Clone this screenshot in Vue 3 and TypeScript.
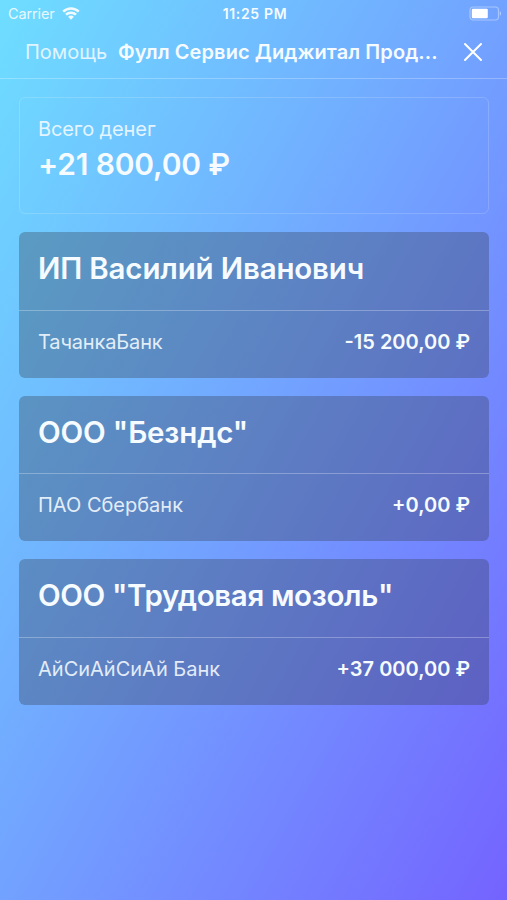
<script setup lang="ts">
interface Company {
  name: string
  nameClass: string
  bank: string
  bankClass: string
  balance: string
}

const companies: Company[] = [
  { name: 'ИП Василий Иванович', nameClass: 'n1', bank: 'ТачанкаБанк', bankClass: 'b1', balance: '-15 200,00 ₽' },
  { name: 'ООО "Безндс"', nameClass: 'n2', bank: 'ПАО Сбербанк', bankClass: 'b2', balance: '+0,00 ₽' },
  { name: 'ООО "Трудовая мозоль"', nameClass: 'n3', bank: 'АйСиАйСиАй Банк', bankClass: 'b3', balance: '+37 000,00 ₽' },
]
</script>

<template>
  <div class="screen">
    <div class="status">
      <div class="carrier">
        <span>Carrier</span>
        <svg class="wifi" width="18" height="13" viewBox="0 0 18 13">
          <g fill="none" stroke="#fff" stroke-width="2.5">
            <path d="M1.2 4.6a11.2 11.2 0 0 1 15.6 0" />
            <path d="M4 7.7a7.1 7.1 0 0 1 10 0" />
          </g>
          <path d="M9 12.7 6.1 9.8a4.2 4.2 0 0 1 5.8 0z" fill="#fff" />
        </svg>
      </div>
      <div class="time">11:25 PM</div>
      <svg class="battery" width="33" height="15" viewBox="0 0 33 15">
        <rect x="1" y="1" width="28.5" height="13" rx="3.2" fill="none" stroke="#fff" stroke-opacity=".38" stroke-width="1.2" />
        <rect x="2.8" y="2.8" width="16" height="9.4" rx="1.2" fill="#fff" />
        <path d="M30.8 5.2c1.6.5 1.6 4.1 0 4.6z" fill="#fff" fill-opacity=".45" />
      </svg>
    </div>

    <header class="nav">
      <span class="help">Помощь</span>
      <span class="title">Фулл Сервис Диджитал Прод...</span>
      <svg class="close" width="20" height="20" viewBox="0 0 20 20">
        <path d="M2 2 18 18M18 2 2 18" stroke="#fff" stroke-width="2" stroke-linecap="round" />
      </svg>
    </header>

    <main class="content">
      <section class="total">
        <div class="label">Всего денег</div>
        <div class="sum">+21 800,00 ₽</div>
      </section>
      <section v-for="c in companies" :key="c.name" class="card">
        <h2 class="name" :class="c.nameClass">{{ c.name }}</h2>
        <div class="row">
          <span class="bank" :class="c.bankClass">{{ c.bank }}</span>
          <span class="balance">{{ c.balance }}</span>
        </div>
      </section>
    </main>
  </div>
</template>

<style>
body {
  margin: 0;
}
</style>

<style scoped>
.screen {
  box-sizing: border-box;
  width: 507px;
  height: 900px;
  overflow: hidden;
  color: #f5fbff;
  font-family: Inter, "Liberation Sans", sans-serif;
  white-space: nowrap;
  background: linear-gradient(to bottom right, #6edeff 0%, #72a2ff 50%, #7463ff 100%);
}
.status {
  display: grid;
  grid-template-columns: 1fr auto 1fr;
  align-items: center;
  height: 27px;
  padding: 0 5px 0 8px;
}
.carrier {
  display: flex;
  align-items: center;
  gap: 7px;
  font-size: 14.5px;
  letter-spacing: -.12px;
  opacity: .9;
}
.time {
  font-size: 14px;
  font-weight: 600;
  letter-spacing: .65px;
}
.battery {
  justify-self: end;
}
.nav {
  display: flex;
  align-items: center;
  box-sizing: border-box;
  height: 52px;
  padding: 0 24px 1px 25px;
  border-bottom: 1px solid rgba(255, 255, 255, .25);
}
.help {
  width: 93px;
  font-size: 20px;
  opacity: .85;
}
.title {
  flex: 1;
  font-size: 20px;
  font-weight: 600;
  letter-spacing: .09px;
}
.content {
  display: flex;
  flex-direction: column;
  gap: 18px;
  padding: 18px 18px 0 19px;
}
.total {
  box-sizing: border-box;
  height: 117px;
  padding: 18px;
  border: 1.5px solid rgba(255, 255, 255, .16);
  border-radius: 6px;
}
.label {
  font-size: 20px;
  line-height: 26px;
  letter-spacing: -.1px;
  opacity: .88;
}
.sum {
  font-size: 30px;
  font-weight: 600;
  line-height: 45px;
  letter-spacing: -.17px;
}
.card {
  box-sizing: border-box;
  height: 145.6px;
  border-radius: 6px;
  background: rgba(53, 62, 79, .34);
}
.name {
  box-sizing: border-box;
  height: 78.5px;
  margin: 0;
  padding-left: 19px;
  border-bottom: 1.5px solid rgba(255, 255, 255, .28);
  font-size: 29.5px;
  font-weight: 600;
  line-height: 73px;
}
.n1 {
  letter-spacing: -.17px;
}
.n2 {
  letter-spacing: -.15px;
}
.n3 {
  letter-spacing: -.36px;
}
.row {
  display: flex;
  justify-content: space-between;
  padding: 0 19px;
  font-size: 20px;
  line-height: 62px;
}
.bank {
  opacity: .88;
}
.b1 {
  letter-spacing: -.15px;
}
.balance {
  font-weight: 600;
}
</style>
